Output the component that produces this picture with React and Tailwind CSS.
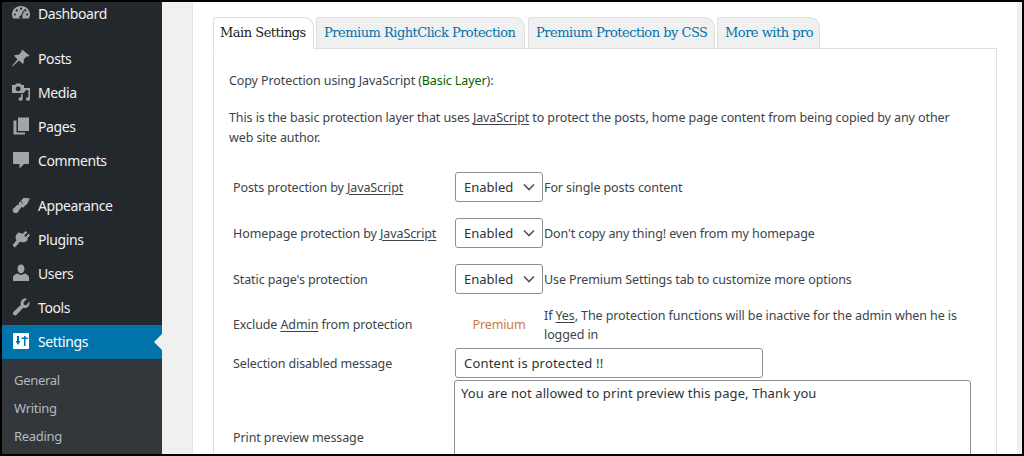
import React from "react";

const ic = "w-5 h-5 shrink-0 fill-[#a0a5aa]";
const icons = {
  dashboard: <svg viewBox="0 0 20 20" className={ic}><path fillRule="evenodd" d="M10 3C4.800 3 1 6.900 1 11.400c0 1.600.5 3 1.300 4.200h15.400c.8-1.200 1.300-2.600 1.300-4.200C19 6.900 15.200 3 10 3zM10 4.600a1.100 1.100 0 110 2.200 1.100 1.100 0 010-2.200zM5.800 6.300a1.100 1.100 0 110 2.200 1.100 1.100 0 010-2.200zM14.200 6.300a1.100 1.100 0 110 2.200 1.100 1.100 0 010-2.200zM3.900 10.400a1.100 1.100 0 110 2.200 1.100 1.100 0 010-2.200zM16.100 10.400a1.100 1.100 0 110 2.200 1.100 1.100 0 010-2.200zM12.400 7.600l.8.4-2.100 5a1.600 1.600 0 11-1.100-.5z" /></svg>,
  posts: <svg viewBox="0 0 20 20" className={ic}><path d="M11 1.500l7.500 6-1.400 1.300-1.200-.5-3.300 3.300c.5 1.700.2 3.200-.6 4.500L8 12.500 1.500 18.500 1 18l5.500-6.800L3 7.700c1.300-1 2.900-1.300 4.500-.8l3.300-3.300-.5-1.200z" /></svg>,
  media: <svg viewBox="0 0 20 20" className={ic}><path fillRule="evenodd" d="M1 3h3l1-1.500h4.500l1 1.500H13v8H1zM7.200 4.300a2.500 2.500 0 100 5 2.500 2.500 0 000-5z" /><path d="M19 6v11a2.100 1.800 0 11-1.600-1.700V8.200h-3.400V10h-1V6zM11.700 12v5a2.100 1.800 0 11-1.600-1.700V12z" /></svg>,
  pages: <svg viewBox="0 0 20 20" className={ic}><path d="M7 1.500h11v13.500H7z" /><path d="M5.500 4.500V16.500H14V18.500H2.500V4.500z" /></svg>,
  comments: <svg viewBox="0 0 20 20" className={ic}><path d="M3 2h14a1 1 0 011 1v10a1 1 0 01-1 1h-4l-4.500 4.500V14H3a1 1 0 01-1-1V3a1 1 0 011-1z" /></svg>,
  appearance: <svg viewBox="0 0 20 20" className={ic}><path d="M10 5.500l2.800-2.700 6.200.7-3.200 6.100-2.500 1.500zM9.100 6.300l4.700 4.800-1.400 1.300-1.500-.2L8.800 12 8 9.600 7.900 7.500zM7 9.300l3 3.200-3.500 5.200c-1 .7-3.300.4-4.200-.5-.8-1-.9-2.500-.2-3.400z" /></svg>,
  plugins: <svg viewBox="0 0 20 20" className={ic}><path d="M14.700 2l1.600 1.500-3.100 3.100 1.300 1.300 3-3.100 1.500 1.500-3 3.100 1.100 1.100-1.300 1.300c-2 2-4.700 1.900-6.500.7L3.800 18.500 1.500 16.300l4-5c-1.300-1.900-1.300-4.500.7-6.500l1.300-1.300 4.100 1.200z" /></svg>,
  users: <svg viewBox="0 0 20 20" className={ic}><path d="M10 1.500c2.200 0 3.500 1.700 3.500 4S12.200 10.300 10 10.300 6.500 7.800 6.500 5.500 7.800 1.500 10 1.500zM6.500 10.600c1 .9 2.200 1.300 3.500 1.300s2.500-.4 3.500-1.300c2.200.6 4.500 1.900 4.500 3.700v3.700H2v-3.700c0-1.800 2.300-3.100 4.500-3.700z" /></svg>,
  tools: <svg viewBox="0 0 20 20" className={ic}><path d="M18.200 4.600c.7 1.800.3 3.800-1.100 5.100-1.300 1.200-3.200 1.700-4.900 1.100l-6.500 7c-.8.9-2.300.9-3.200 0-.9-.9-.8-2.200.1-3.100l7.200-6.800c-.6-1.800-.1-3.700 1.200-5 1.300-1.300 3.300-1.700 5-1.100L12.400 5.400l.6 2.300 2.200.6z" /></svg>,
};

const Item = ({ icon, label }) => (
  <div className="h-[34px] flex items-center pl-[9px] pb-[2px] gap-[7px] text-[14px] tracking-[-0.4px] text-[#f0f0f1]">
    {icons[icon]}
    <span>{label}</span>
  </div>
);

const Sub = ({ label }) => (
  <div className="h-[28px] flex items-center pl-[12px] text-[13px] tracking-[-0.3px] text-[#b4b9be]">{label}</div>
);

const Tab = ({ label, active, className }) => (
  <div
    className={
      "h-[31px] flex items-center border border-[#dfdfdf] rounded-tr-[10px] rounded-tl-[3px] text-[13px] font-['DejaVu_Serif'] tracking-[-0.5px] " +
      className + " " +
      (active
        ? "bg-white border-b-white h-[32px] -mb-px text-[#222] z-10"
        : "bg-[#f0f0f0] border-b-0 text-[#0073aa]")
    }
  >
    {label}
  </div>
);

const U = ({ children }) => <span className="underline underline-offset-2">{children}</span>;

const Chevron = () => (
  <svg viewBox="0 0 20 20" className="w-5 h-5 absolute right-[3px] top-[4px] pointer-events-none">
    <path d="M5 7.500l5 5 5-5" fill="none" stroke="#50575e" strokeWidth="1.700" />
  </svg>
);

const Sel = () => (
  <div className="relative w-[88px] h-[30px] shrink-0 border border-[#8c8f94] rounded-[3px] flex items-center pl-[8px] pt-[2px] text-[13px] tracking-normal text-[#2c3338] bg-white">
    Enabled
    <Chevron />
  </div>
);

const Row = ({ label, desc }) => (
  <div className="h-[46px] flex items-center">
    <div className="w-[226px] pl-[4px] pt-[2px] shrink-0">{label}</div>
    <Sel />
    <div className="pl-px pt-[2px]">{desc}</div>
  </div>
);

export default function App() {
  return (
    <div className="w-[1024px] h-[456px] overflow-hidden bg-black p-[2px] text-[12.5px] tracking-[-0.1px] text-[#3c434a] font-['Noto_Sans',sans-serif]">
      <div className="flex h-full bg-[#f0f0f1] overflow-hidden">
        <div className="w-[160px] shrink-0 bg-[#23282d] flex flex-col">
          <div className="h-[24px] flex items-center pl-[9px] pb-[2px] gap-[7px] text-[14px] tracking-[-0.4px] text-[#f0f0f1]">
            {icons.dashboard}
            <span>Dashboard</span>
          </div>
          <div className="h-[16px]" />
          <Item icon="posts" label="Posts" />
          <Item icon="media" label="Media" />
          <Item icon="pages" label="Pages" />
          <Item icon="comments" label="Comments" />
          <div className="h-[11px]" />
          <Item icon="appearance" label="Appearance" />
          <Item icon="plugins" label="Plugins" />
          <Item icon="users" label="Users" />
          <Item icon="tools" label="Tools" />
          <div className="relative h-[34px] flex items-center pl-[9px] pb-[2px] gap-[7px] text-[14px] tracking-[-0.4px] text-white bg-[#0073aa]">
            <svg viewBox="0 0 20 20" className="w-5 h-5 shrink-0 fill-white">
              <path fillRule="evenodd" d="M3 2h14a1 1 0 011 1v14a1 1 0 01-1 1H3a1 1 0 01-1-1V3a1 1 0 011-1zM6 5v5H4.500L7 14l2.500-4H8V5zM13 5v1.500h-2.500V8H13v7h1.500V8H17V6.500h-2.500V5z" />
            </svg>
            <span>Settings</span>
            <div className="absolute right-0 top-[9px] border-y-[8px] border-y-transparent border-r-[8px] border-r-[#f0f0f1]" />
          </div>
          <div className="flex-1 bg-[#32373c] pt-[8px]">
            <Sub label="General" />
            <Sub label="Writing" />
            <Sub label="Reading" />
          </div>
        </div>
        <div className="w-[30px] shrink-0" />
        <div className="flex-1 bg-white border-l border-[#eadfe4] pl-[20px] pt-[15px] flex flex-col">
          <div className="flex items-start">
            <Tab label="Main Settings" active className="w-[101px] pl-[6px]" />
            <Tab label="Premium RightClick Protection" className="ml-[2px] w-[209px] pl-[7px]" />
            <Tab label="Premium Protection by CSS" className="ml-[3px] w-[187px] pl-[7px]" />
            <Tab label="More with pro" className="ml-[2px] w-[103px] pl-[7px]" />
          </div>
          <div className="w-[784px] flex-1 border border-[#dfdfdf] border-b-0 pl-[15px] pt-[22px] pr-[20px]">
            <p className="leading-[20px]">
              Copy Protection using JavaScript (<span className="text-[#006400]">Basic Layer</span>):
            </p>
            <p className="leading-[20px] mt-[17px] mb-[16px] max-w-[730px]">
              This is the basic protection layer that uses <U>JavaScript</U> to protect the posts, home page content from being copied by any other web site author.
            </p>
            <Row label={<>Posts protection by <U>JavaScript</U></>} desc="For single posts content" />
            <Row label={<>Homepage protection by <U>JavaScript</U></>} desc="Don't copy any thing! even from my homepage" />
            <Row label="Static page's protection" desc="Use Premium Settings tab to customize more options" />
            <div className="h-[43px] flex items-center">
              <div className="w-[226px] pl-[4px] pt-[3px] shrink-0">Exclude <U>Admin</U> from protection</div>
              <div className="w-[88px] shrink-0 text-center text-[#cc7a3e] pt-[3px]">Premium</div>
              <div className="pl-px pt-[2px] w-[430px] leading-[19px]">If <U>Yes</U>, The protection functions will be inactive for the admin when he is logged in</div>
            </div>
            <div className="h-[36px] flex items-center">
              <div className="w-[226px] pl-[4px] pt-[2px] shrink-0">Selection disabled message</div>
              <div className="w-[308px] h-[30px] border border-[#8c8f94] rounded-[3px] flex items-center pl-[8px] pt-[2px] text-[13px] tracking-[0.2px] text-[#2c3338]">
                Content is protected !!
              </div>
            </div>
            <div className="flex items-end -mt-px">
              <div className="w-[225px] pl-[4px] shrink-0 pb-[32px]">Print preview message</div>
              <div className="w-[517px] h-[100px] shrink-0 border border-[#8c8f94] rounded-[3px] px-[6px] pt-[3px] text-[13px] tracking-[0.1px] text-[#2c3338]">
                You are not allowed to print preview this page, Thank you
              </div>
            </div>
          </div>
        </div>
        <div className="w-[5px] shrink-0 bg-[#f0f0f1]" />
      </div>
    </div>
  );
}
